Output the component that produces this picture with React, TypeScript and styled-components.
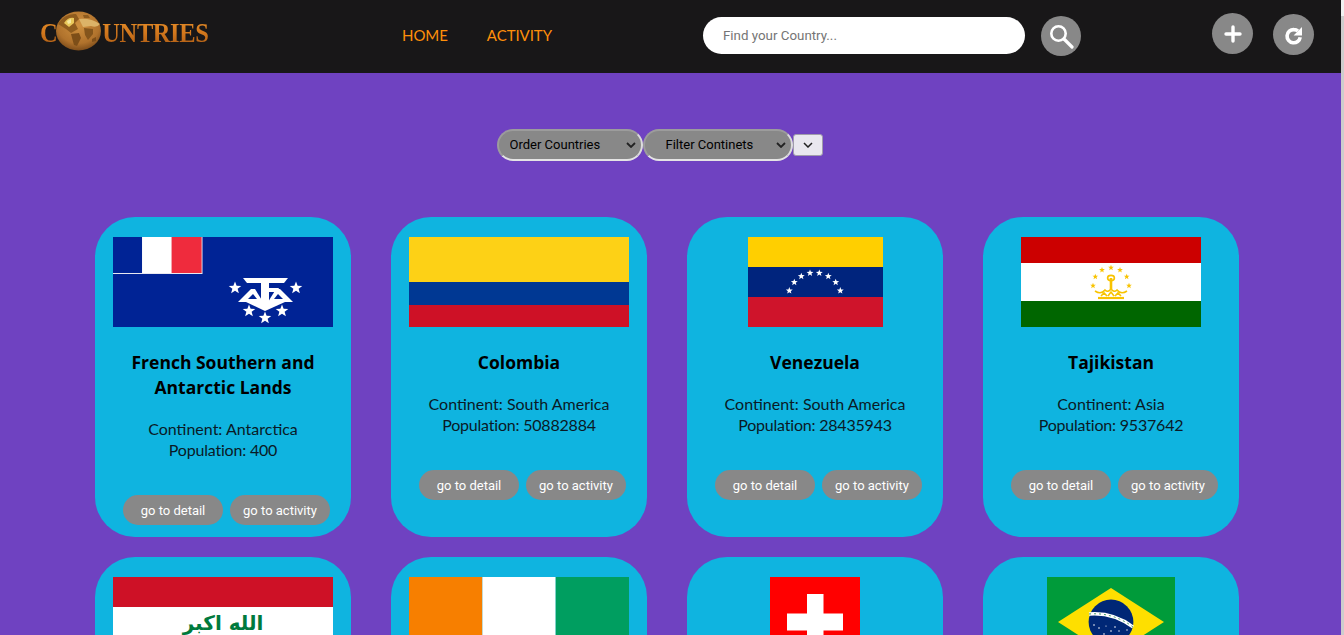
import React from "react";
import styled, { createGlobalStyle } from "styled-components";
import { Plus } from "lucide-react";

const Global = createGlobalStyle`
  body { margin: 0; padding-right: 3px; background: #6f42c1; font-family: Lato, "Open Sans", sans-serif; }
`;

const chevron = (c: string, w: string) =>
  `url("data:image/svg+xml,%3Csvg xmlns='http://www.w3.org/2000/svg' width='10' height='6' viewBox='0 0 10 6'%3E%3Cpath d='M1 1l4 4 4-4' fill='none' stroke='${c}' stroke-width='${w}'/%3E%3C/svg%3E")`;

const ScrollStrip = styled.div`
  position: fixed;
  top: 0;
  right: 0;
  bottom: 0;
  width: 3px;
  background: linear-gradient(180deg, #f1f1f1 16px, #cdcdcd 16px);
`;

const Nav = styled.nav`
  display: flex;
  align-items: flex-start;
  height: 73px;
  background: #181718;
`;

const Logo = styled.div`
  display: flex;
  align-items: center;
  flex: none;
  width: 168px;
  height: 42px;
  margin: 10px 0 0 40px;
`;

const LogoText = styled.span`
  flex: none;
  margin-top: 4px;
  font-family: "Liberation Serif", serif;
  font-weight: 700;
  font-size: 24.5px;
  line-height: 1;
  letter-spacing: -0.4px;
  transform: scaleY(1.12);
  background: linear-gradient(180deg, #e58d28 0%, #d0761c 50%, #a85a14 100%);
  -webkit-background-clip: text;
  background-clip: text;
  color: transparent;
`;

const GlobeSvg = styled.svg`
  display: block;
  flex: none;
  margin-left: -2px;
`;

const Links = styled.div`
  display: flex;
  flex: none;
  gap: 39px;
  width: 301px;
  margin: 25px 0 0 194px;
`;

const NavLink = styled.a`
  font-size: 15px;
  line-height: 21px;
  letter-spacing: -0.05px;
  color: #ff8f0a;
`;

const SearchBox = styled.div`
  display: flex;
  align-items: flex-start;
  flex: none;
  gap: 16px;
  margin-top: 16px;
`;

const SearchInput = styled.input`
  box-sizing: border-box;
  width: 322px;
  height: 37px;
  margin-top: 1px;
  padding: 0 20px;
  border: none;
  border-radius: 19px;
  background: #fff;
  font-family: Roboto, sans-serif;
  font-size: 13.33px;
  outline: none;
  &::placeholder { color: #757575; }
`;

const Circle = styled.button<{ $size: number; $top?: number }>`
  display: flex;
  align-items: center;
  justify-content: center;
  flex: none;
  width: ${(p) => p.$size}px;
  height: ${(p) => p.$size}px;
  margin-top: ${(p) => p.$top ?? 0}px;
  padding: 0;
  border: none;
  border-radius: 50%;
  background: #888;
  color: #fff;
`;

const Actions = styled.div`
  display: flex;
  flex: none;
  gap: 20px;
  margin-left: 131px;
`;

const Filters = styled.div`
  display: flex;
  align-items: center;
  justify-content: center;
  padding: 56px 22px 56px 0;
`;

const PillSelect = styled.select<{ $w: number; $pad: number }>`
  appearance: none;
  box-sizing: border-box;
  width: ${(p) => p.$w}px;
  height: 32px;
  padding: 0 0 1px ${(p) => p.$pad}px;
  border-width: 2px;
  border-style: solid;
  border-color: #9c9c9c #dcdcdc #e4e4e4 #9c9c9c;
  border-radius: 16px;
  background: #888 ${chevron("%23222", "1.8")} no-repeat right 5px center;
  color: #000;
  font-family: Roboto, sans-serif;
  font-size: 13px;
`;

const PlainSelect = styled.select`
  appearance: none;
  box-sizing: border-box;
  width: 30px;
  height: 22px;
  border: 1px solid #a09cab;
  border-radius: 3px;
  background: #e9e7ef ${chevron("%23222", "1.5")} no-repeat center;
`;

const Grid = styled.div`
  display: grid;
  grid-template-columns: repeat(4, 256px);
  gap: 20px 40px;
  padding: 0 0 20px 95px;
`;

const Card = styled.article`
  box-sizing: border-box;
  display: flex;
  flex-direction: column;
  align-items: center;
  height: 320px;
  padding-top: 20px;
  border-radius: 40px;
  background: #0fb4e0;
  text-align: center;
`;

const FlagSvg = styled.svg`
  display: block;
  flex: none;
  height: 90px;
`;

const Title = styled.h2`
  width: 220px;
  margin: 23px 0 0;
  font-family: "Open Sans", sans-serif;
  font-size: 17.5px;
  font-weight: 700;
  line-height: 25px;
  color: #000;
`;

const Info = styled.p`
  margin: 18px 0 0;
  font-size: 16px;
  line-height: 21px;
  color: #0a1a26;
`;

const Population = styled.span`
  letter-spacing: -0.2px;
`;

const Buttons = styled.div`
  display: flex;
  gap: 7px;
  margin-top: 35px;
  padding-left: 7px;
`;

const Go = styled.button`
  width: 100px;
  height: 30px;
  padding: 0;
  border: none;
  border-radius: 15px;
  background: #888;
  color: #fff;
  font-family: Roboto, sans-serif;
  font-size: 13px;
`;

const starPts = (cx: number, cy: number, r: number) => {
  const pts: string[] = [];
  for (let i = 0; i < 10; i++) {
    const rad = i % 2 ? r * 0.42 : r;
    const a = -Math.PI / 2 + (i * Math.PI) / 5;
    pts.push(`${cx + rad * Math.cos(a)},${cy + rad * Math.sin(a)}`);
  }
  return pts.join(" ");
};

const Stars = ({ list, r, fill }: { list: number[][]; r: number; fill: string }) => (
  <>
    {list.map(([x, y]) => (
      <polygon key={`${x}-${y}`} points={starPts(x, y, r)} fill={fill} />
    ))}
  </>
);

const FlagFrame = ({ w, children }: { w: number; children: React.ReactNode }) => (
  <FlagSvg width={w} height={90} viewBox={`0 0 ${w} 90`}>
    {children}
  </FlagSvg>
);

const TF = () => (
  <FlagFrame w={220}>
    <rect width="220" height="90" fill="#002395" />
    <rect width="89.5" height="37" fill="#e8e8f0" />
    <rect width="29" height="36" fill="#002395" />
    <rect x="29.3" width="29.3" height="36" fill="#fff" />
    <rect x="58.6" width="30" height="36" fill="#ef2b3d" />
    <Stars fill="#fff" r={6.6} list={[[122, 51], [183, 51], [136, 74], [169, 74], [152, 81]]} />
    <g fill="#fff">
      <polygon points="130,41 175,41 171,46 134,46" />
      <polygon points="148,46 156,46 156,68 148,68" />
      <polygon points="156,51 166,51 164,55 156,55" />
      <polygon points="125,65 138,52 142,52 150,65" />
      <polygon points="180,65 167,52 163,52 155,65" />
      <polygon points="133,65 172,65 152,74" />
    </g>
    <polygon points="135,62 140,57 144,62" fill="#002395" />
    <polygon points="170,62 165,57 161,62" fill="#002395" />
  </FlagFrame>
);

const CO = () => (
  <FlagFrame w={220}>
    <rect width="220" height="45" fill="#fdd116" />
    <rect y="45" width="220" height="23" fill="#003893" />
    <rect y="68" width="220" height="22" fill="#ce1126" />
  </FlagFrame>
);

const VE = () => (
  <FlagFrame w={135}>
    <rect width="135" height="30" fill="#ffcf00" />
    <rect y="30" width="135" height="30" fill="#00247d" />
    <rect y="60" width="135" height="30" fill="#cf142b" />
    <Stars
      fill="#fff"
      r={3.6}
      list={[[41.3, 53.7], [46.3, 45.3], [53.3, 39.3], [62, 36], [71.3, 36], [80.3, 39.3], [87.7, 45.3], [92.3, 53.7]]}
    />
  </FlagFrame>
);

const TJ = () => (
  <FlagFrame w={180}>
    <rect width="180" height="26" fill="#cc0000" />
    <rect y="26" width="180" height="38" fill="#fff" />
    <rect y="64" width="180" height="26" fill="#006600" />
    <Stars
      fill="#f8c300"
      r={3}
      list={[[72, 48.7], [74.3, 39.7], [81, 33], [90, 30.7], [99, 33], [105.7, 39.7], [108, 48.7]]}
    />
    <g fill="none" stroke="#f8c300" strokeWidth="1.6">
      <path d="M77 61 H103" strokeWidth="2.2" />
      <path d="M90 41 V52" strokeWidth="2.6" />
      <ellipse cx="90" cy="41" rx="3.4" ry="2.6" />
      <path d="M74 54 Q80 58 84 53 Q87 56 90 52 Q93 56 96 53 Q100 58 106 54" />
      <path d="M80 59 L83 56 L86 59 M87 59 L90 55 L93 59 M94 59 L97 56 L100 59" />
    </g>
  </FlagFrame>
);

const IQ = () => (
  <FlagFrame w={220}>
    <rect width="220" height="30" fill="#ce1126" />
    <rect y="30" width="220" height="30" fill="#fff" />
    <rect y="60" width="220" height="30" fill="#000" />
    <text
      x="110"
      y="53"
      textAnchor="middle"
      direction="rtl"
      fill="#007a3d"
      fontFamily="'DejaVu Sans', sans-serif"
      fontWeight="700"
      fontSize="20"
    >
      الله اكبر
    </text>
  </FlagFrame>
);

const CI = () => (
  <FlagFrame w={220}>
    <rect width="73.4" height="90" fill="#f77f00" />
    <rect x="73.4" width="73.3" height="90" fill="#fff" />
    <rect x="146.7" width="73.3" height="90" fill="#009e60" />
  </FlagFrame>
);

const CH = () => (
  <FlagFrame w={90}>
    <rect width="90" height="90" fill="#ff0000" />
    <rect x="37" y="17" width="16.5" height="56" fill="#fff" />
    <rect x="17" y="36.5" width="56" height="17" fill="#fff" />
  </FlagFrame>
);

const BR = () => (
  <FlagFrame w={128}>
    <rect width="128" height="90" fill="#009b3a" />
    <polygon points="64,11 117,45 64,79 11,45" fill="#fedf00" />
    <circle cx="64" cy="45" r="22.4" fill="#002776" />
    <path d="M42 37 Q66 35 86 50" fill="none" stroke="#fff" strokeWidth="3.4" />
    <path d="M42 37 Q66 35 86 50" fill="none" stroke="#3f9a63" strokeWidth="1" strokeDasharray="2 3" />
    <g fill="#fff">
      <circle cx="47" cy="48" r="0.8" />
      <circle cx="52" cy="51" r="0.8" />
      <circle cx="59" cy="49" r="0.6" />
      <circle cx="68" cy="50" r="0.8" />
      <circle cx="64" cy="54" r="0.8" />
      <circle cx="72" cy="54" r="0.7" />
      <circle cx="57" cy="57" r="0.8" />
      <circle cx="80" cy="53" r="0.7" />
      <circle cx="66" cy="60" r="0.8" />
      <circle cx="75" cy="60" r="0.7" />
    </g>
  </FlagFrame>
);

const Globe = () => (
  <GlobeSvg width="47" height="42" viewBox="0 0 47 42">
    <defs>
      <radialGradient id="globeFill" cx="50%" cy="35%" r="72%">
        <stop offset="0%" stopColor="#cf9140" />
        <stop offset="65%" stopColor="#b0722c" />
        <stop offset="100%" stopColor="#6b3f14" />
      </radialGradient>
    </defs>
    <ellipse cx="23.5" cy="21" rx="22.5" ry="19.5" fill="url(#globeFill)" />
    <path d="M3 14 Q10 3 21 4 L24 9 L20 13 L23 19 L16 23 L11 19 Z" fill="#8f5c1e" />
    <path d="M9 13 Q13 7 19 8 L19 13 L14 17 Z" fill="#e9c75a" />
    <path d="M12 11 L16 9 L16 13 L13 14 Z" fill="#f4e9a0" />
    <path d="M24 9 Q36 8 45 14 Q42 18 36 16 L28 17 Z" fill="#dcb368" />
    <path d="M28 5 L33 5 L35 8 L29 8 Z" fill="#8f5c1e" />
    <path d="M16 24 L24 23 L26 28 L22 36 L19 35 L17 28 Z" fill="#7d4e18" />
    <path d="M29 18 L38 19 L38 24 L33 30 L30 25 Z" fill="#84551c" />
    <path d="M37 29 L41 27 L41 31 L37 32 Z" fill="#7d4e18" />
  </GlobeSvg>
);

const SearchIcon = () => (
  <svg width="25" height="25" viewBox="0 0 25 25" fill="none" stroke="currentColor">
    <circle cx="9.5" cy="9.5" r="7.2" strokeWidth="2.6" />
    <path d="M15 15 L23 23" strokeWidth="3.2" strokeLinecap="round" />
  </svg>
);

const RefreshIcon = () => (
  <svg width="20" height="20" viewBox="0 0 20 20">
    <path
      d="M16.2 12.2 A6.6 6.6 0 1 1 10 4.6 Q12.4 4.6 14 6"
      fill="none"
      stroke="currentColor"
      strokeWidth="3.6"
    />
    <polygon points="18,2 18,10.4 9.6,10.4" fill="currentColor" />
  </svg>
);

const countries = [
  { Flag: TF, name: "French Southern and Antarctic Lands", continent: "Antarctica", population: 400 },
  { Flag: CO, name: "Colombia", continent: "South America", population: 50882884 },
  { Flag: VE, name: "Venezuela", continent: "South America", population: 28435943 },
  { Flag: TJ, name: "Tajikistan", continent: "Asia", population: 9537642 },
  { Flag: IQ, name: "Iraq", continent: "Asia", population: 40222503 },
  { Flag: CI, name: "Ivory Coast", continent: "Africa", population: 26378275 },
  { Flag: CH, name: "Switzerland", continent: "Europe", population: 8654622 },
  { Flag: BR, name: "Brazil", continent: "South America", population: 212559409 },
];

export default function App() {
  return (
    <>
      <Global />
      <ScrollStrip />
      <Nav>
        <Logo>
          <LogoText>C</LogoText>
          <Globe />
          <LogoText>UNTRIES</LogoText>
        </Logo>
        <Links>
          <NavLink>HOME</NavLink>
          <NavLink>ACTIVITY</NavLink>
        </Links>
        <SearchBox>
          <SearchInput placeholder="Find your Country..." />
          <Circle $size={40}>
            <SearchIcon />
          </Circle>
        </SearchBox>
        <Actions>
          <Circle $size={41} $top={13}>
            <Plus size={24} strokeWidth={3.4} />
          </Circle>
          <Circle $size={41} $top={14}>
            <RefreshIcon />
          </Circle>
        </Actions>
      </Nav>
      <Filters>
        <PillSelect $w={146} $pad={11}>
          <option>Order Countries</option>
        </PillSelect>
        <PillSelect $w={150} $pad={21}>
          <option>Filter Continets</option>
        </PillSelect>
        <PlainSelect />
      </Filters>
      <Grid>
        {countries.map(({ Flag, name, continent, population }) => (
          <Card key={name}>
            <Flag />
            <Title>{name}</Title>
            <Info>
              Continent: {continent}
              <br />
              <Population>Population: {population}</Population>
            </Info>
            <Buttons>
              <Go>go to detail</Go>
              <Go>go to activity</Go>
            </Buttons>
          </Card>
        ))}
      </Grid>
    </>
  );
}
